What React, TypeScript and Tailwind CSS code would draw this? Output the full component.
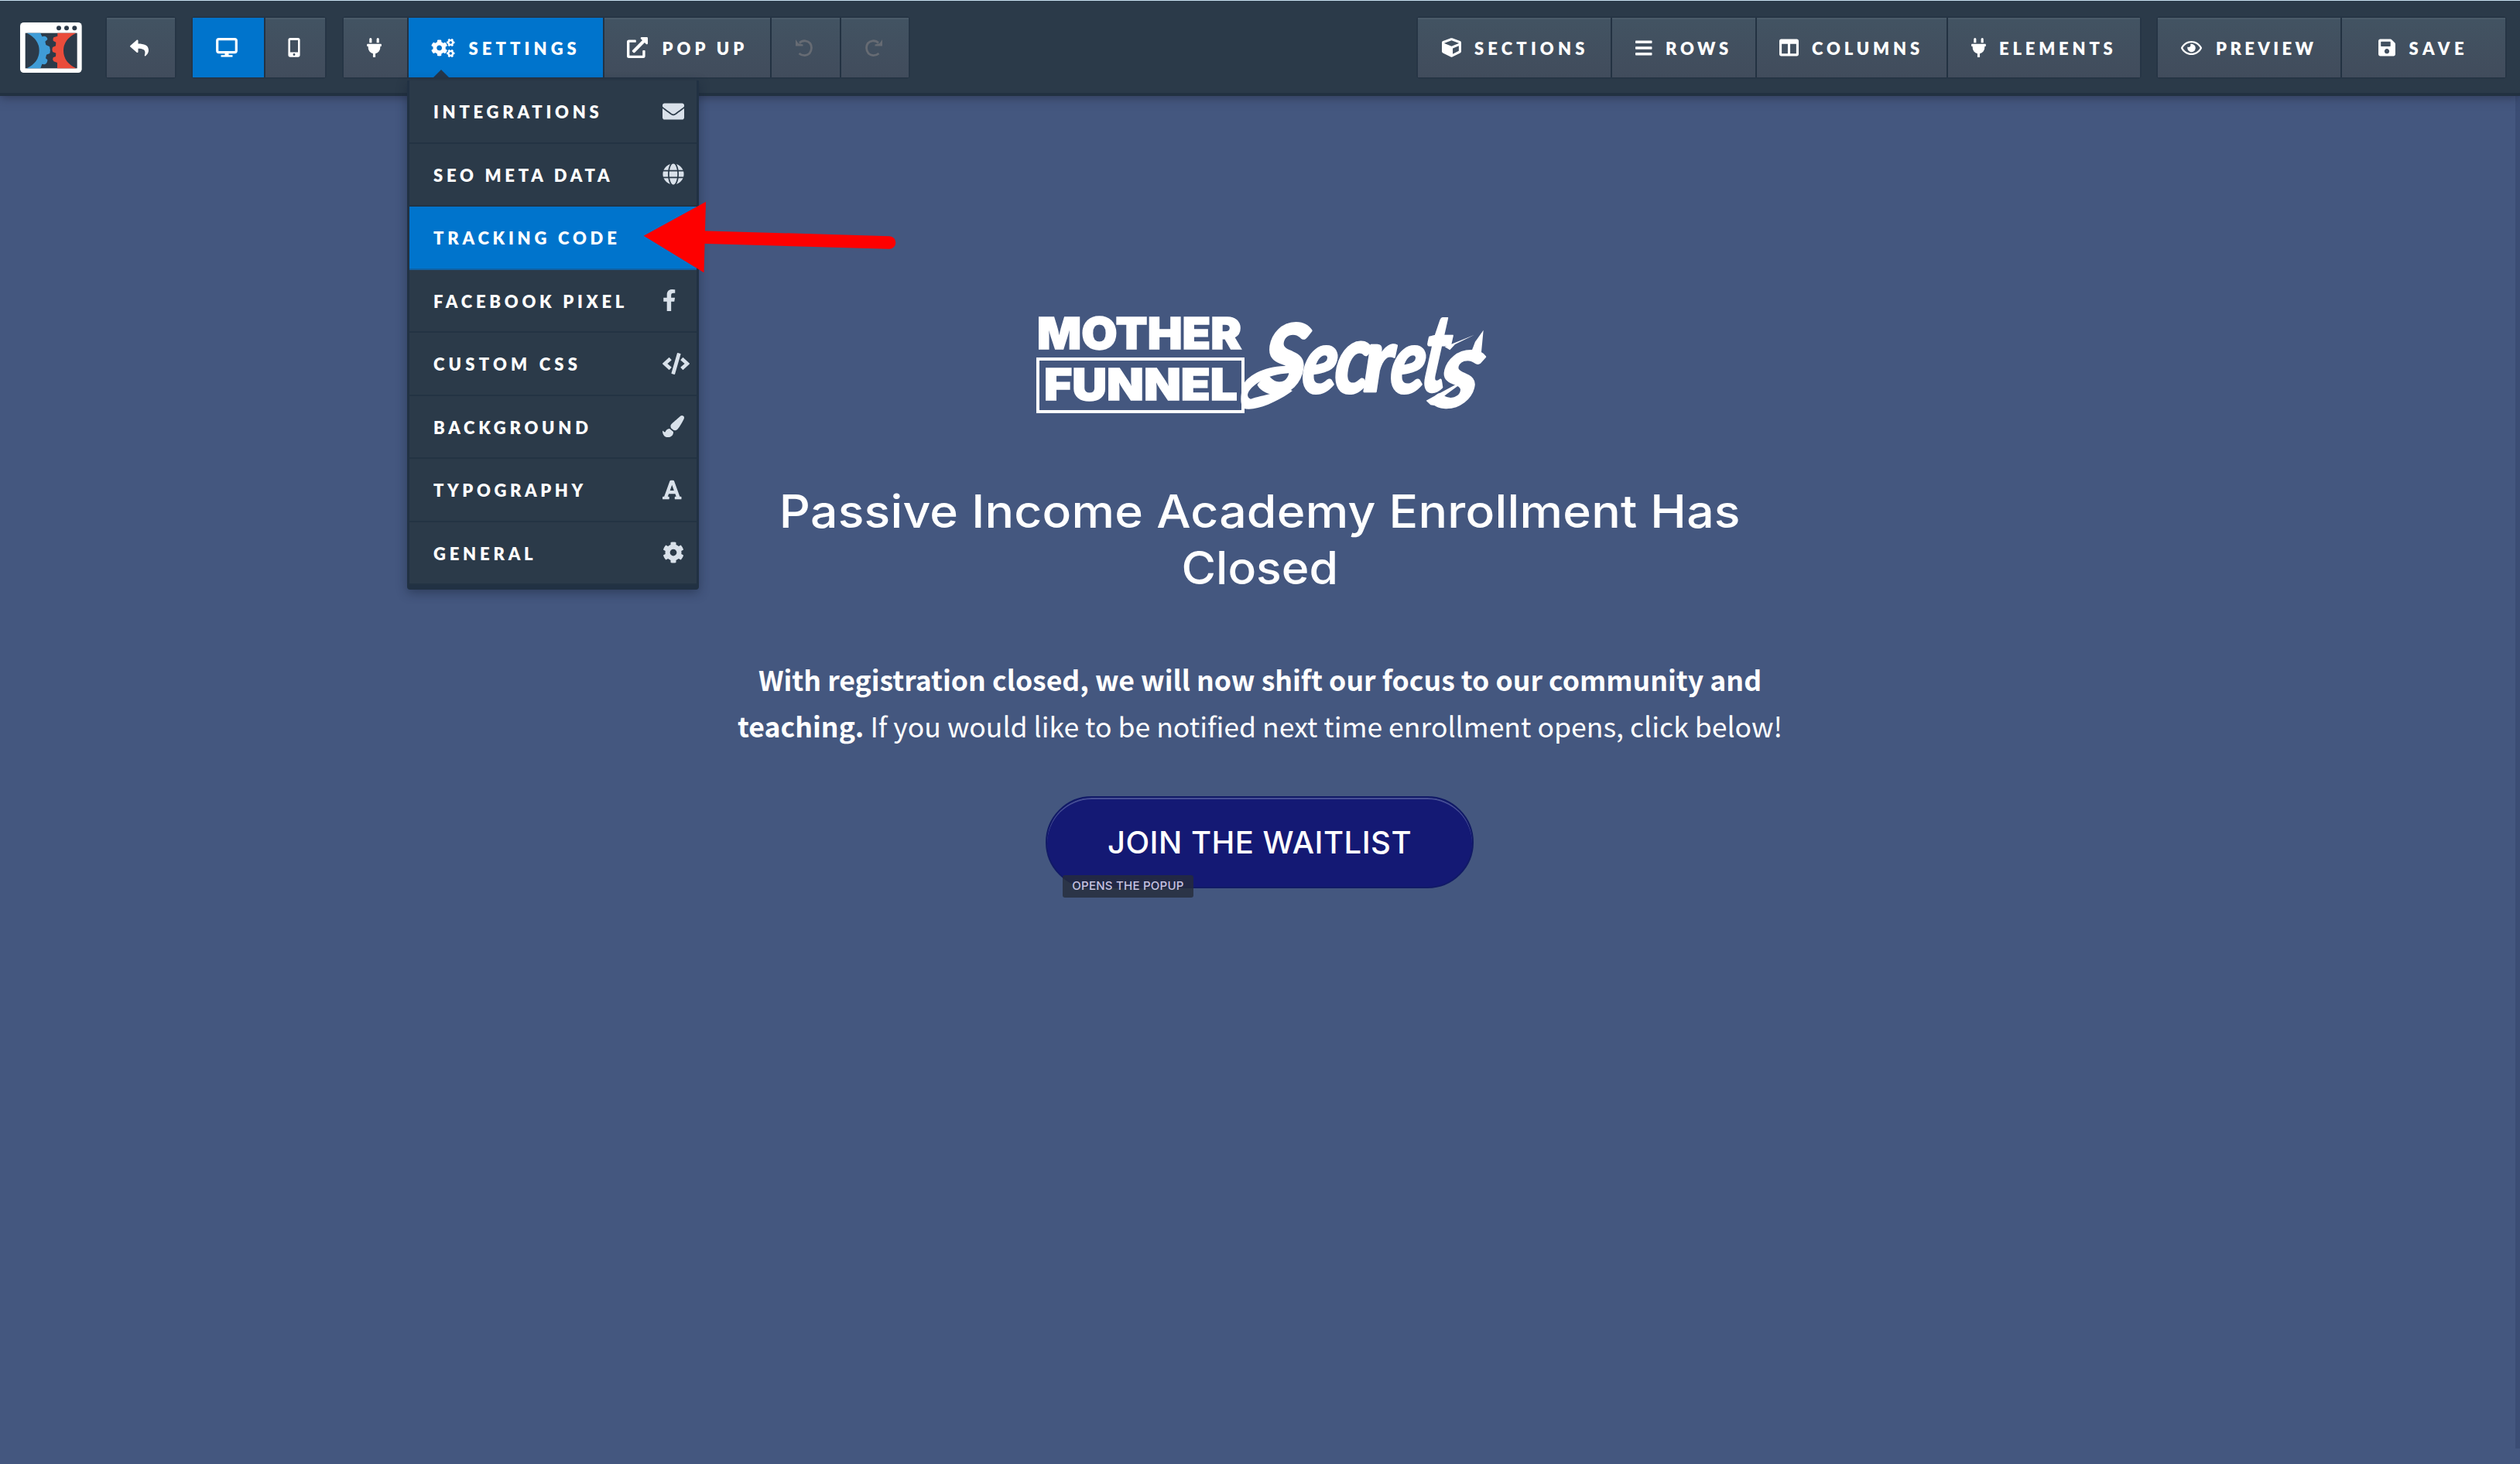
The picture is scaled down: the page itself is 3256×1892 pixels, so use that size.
import type { ReactNode } from "react";
import {
  FaCode, FaCog, FaCogs, FaColumns, FaCube, FaEnvelope, FaExternalLinkAlt, FaFacebookF,
  FaFont, FaGlobe, FaPaintBrush, FaPlug, FaRegEye, FaReply, FaSave,
} from "react-icons/fa";

function Logo() {
  return (
    <svg viewBox="0 0 300 240" className="ml-5 h-20 w-[100px] shrink-0" aria-hidden="true">
      <rect x="18" y="27" width="239" height="195" rx="14" fill="#fff" />
      <rect x="38" y="68" width="201" height="137" fill="#2c3a49" />
      <path d="M44 68H97L103 82L112 80Q124 82 124 93L115 101L118 114L132 121Q137 135 133 147L120 152L117 166L124 172Q125 186 112 190L103 188L97 205H44Q92 182 92 136Q92 92 44 68Z" fill="#3f9cd7" />
      <path d="M235 68H163V80L148 85Q143 92 146 98L157 104L156 118L144 123Q140 132 144 141L157 146L156 159L146 163Q142 170 148 178L162 183V205H235Q186 182 186 136Q186 92 235 68Z" fill="#ea4c3b" />
      <circle cx="168" cy="49" r="9" fill="#2c3a49" />
      <circle cx="198" cy="49" r="9" fill="#2c3a49" />
      <circle cx="229" cy="49" r="9" fill="#2c3a49" />
    </svg>
  );
}

function DesktopIcon() {
  return (
    <svg viewBox="0 0 28 25" className="h-[25px] w-7" fill="none" stroke="#fff" aria-hidden="true">
      <rect x="1.7" y="1.6" width="24.6" height="17" rx="2" strokeWidth="3.2" />
      <path d="M14 19V23" strokeWidth="5" />
      <path d="M6.5 23.4H21.5" strokeWidth="2.4" />
    </svg>
  );
}

function MobileIcon() {
  return (
    <svg viewBox="0 0 16 25" className="h-[25px] w-4" aria-hidden="true">
      <path fillRule="evenodd" fill="#fff" d="M3 0H13Q15.6 0 15.6 2.6V22Q15.6 24.8 13 24.8H3Q.4 24.8 .4 22V2.6Q.4 0 3 0ZM3 3V18.6H13V3ZM8 20A1.4 1.4 0 1 0 8 22.9A1.4 1.4 0 1 0 8 20Z" />
    </svg>
  );
}

function TurnIcon({ flip }: { flip?: boolean }) {
  return (
    <svg viewBox="0 0 24 24" className={flip ? "h-6 w-6 -scale-x-100" : "h-6 w-6"} fill="none" stroke="#666b73" aria-hidden="true">
      <path d="M6 5.5Q9 2.5 13.5 2.8Q21.5 4 21.5 12Q21 20.5 13 21.6Q8.500 21.800 5.500 19" strokeWidth="2.8" />
      <path d="M1 1L1 9.500H10.500V7.500L4.500 6Z" fill="#666b73" stroke="none" />
    </svg>
  );
}

function RowsIcon() {
  return (
    <svg viewBox="0 0 22 20" className="h-5 w-[22px]" fill="#fff" aria-hidden="true">
      <rect y=".5" width="21.500" height="3.600" rx=".8" />
      <rect y="8.200" width="21.500" height="3.600" rx=".8" />
      <rect y="15.900" width="21.500" height="3.600" rx=".8" />
    </svg>
  );
}

function Group({ className, children }: { className: string; children: ReactNode }) {
  return (
    <div className={`flex h-[77px] shrink-0 gap-[2px] rounded-[3px] bg-[#233242] ring-2 ring-[#263545] ${className}`}>
      {children}
    </div>
  );
}

const idle = "bg-linear-to-b from-[#425362] to-[#414c5c] shadow-[inset_0_2px_0_#4b5b69]";
const active = "bg-[#0074cc]";

function Tool({ className, on, children }: { className: string; on?: boolean; children: ReactNode }) {
  return (
    <button className={`relative flex h-full shrink-0 items-center whitespace-nowrap text-white ${on ? active : idle} ${className}`}>
      {children}
    </button>
  );
}

function Label({ className, children }: { className: string; children: ReactNode }) {
  return <span className={`pt-[3px] font-[Lato,sans-serif] text-[22px] leading-[74px] font-extrabold ${className}`}>{children}</span>;
}

function Item({ label, tracking, icon, on }: { label: string; tracking: string; icon?: ReactNode; on?: boolean }) {
  return (
    <li className={`flex h-[81.5px] items-center border-b-2 pl-[31px] ${on ? "border-[#1161a3] bg-[#0074cc]" : "border-[#233343]"}`}>
      <span className={`w-[296px] pt-[2px] font-[Lato,sans-serif] text-[22px] font-extrabold whitespace-nowrap text-white ${tracking}`}>{label}</span>
      <span className="text-[28px] text-[#d9e1ea]">{icon}</span>
    </li>
  );
}

function SettingsMenu() {
  return (
    <div className="absolute top-[81px] -left-[2px] z-10 w-[377px] rounded-b-[4px] border-x-3 border-b-6 border-[#213143] bg-[#2b3a49] shadow-[0_4px_14px_rgba(20,30,50,0.45)]">
      <ul>
        <Item label="INTEGRATIONS" tracking="tracking-[4.75px]" icon={<FaEnvelope />} />
        <Item label="SEO META DATA" tracking="tracking-[4.75px]" icon={<FaGlobe />} />
        <Item label="TRACKING CODE" tracking="tracking-[4.8px]" on />
        <Item label="FACEBOOK PIXEL" tracking="tracking-[4.75px]" icon={<FaFacebookF className="w-[17.5px]" />} />
        <Item label="CUSTOM CSS" tracking="tracking-[5.2px]" icon={<FaCode className="w-[35px]" />} />
        <Item label="BACKGROUND" tracking="tracking-[4.75px]" icon={<FaPaintBrush />} />
        <Item label="TYPOGRAPHY" tracking="tracking-[4.6px]" icon={<FaFont className="w-[24.5px]" />} />
        <Item label="GENERAL" tracking="tracking-[4.8px]" icon={<FaCog />} />
      </ul>
    </div>
  );
}

function Header() {
  return (
    <header className="relative z-10 flex h-[124px] w-full items-start border-t border-b-4 border-t-[#c9e2f2] border-b-[#223141] bg-[#2b3a49] shadow-[0_2px_12px_rgba(35,40,60,0.6)]">
      <div className="mt-[19px] w-[138px]"><Logo /></div>
      <Group className="mt-[22px] w-[88px]">
        <Tool className="w-full pl-[30px]"><FaReply className="h-6 w-6" /></Tool>
      </Group>
      <Group className="mt-[22px] ml-[23px] w-[171px]">
        <Tool on className="w-[91.5px] pl-[30px]"><DesktopIcon /></Tool>
        <Tool className="grow pl-[29px]"><MobileIcon /></Tool>
      </Group>
      <Group className="mt-[22px] ml-[24px] w-[730px]">
        <Tool className="w-[82px] pl-[30px]"><FaPlug className="h-[25px] w-[19px]" /></Tool>
        <div className="relative">
          <Tool on className="w-[251px] pl-[29px]">
            <FaCogs className="h-6 w-[31px]" />
            <Label className="ml-[17.5px] tracking-[5.1px]">SETTINGS</Label>
            <span className="absolute bottom-0 left-[32px] border-x-10 border-b-10 border-x-transparent border-b-[#25364a]" />
          </Tool>
          <SettingsMenu />
        </div>
        <Tool className="w-[214px] pl-[29px]">
          <FaExternalLinkAlt className="h-[27px] w-[27px]" />
          <Label className="ml-[18.5px] tracking-[5px]">POP UP</Label>
        </Tool>
        <Tool className="w-[88px] pl-[30px]"><TurnIcon /></Tool>
        <Tool className="grow pl-[30px]"><TurnIcon flip /></Tool>
      </Group>
      <Group className="mt-[22px] ml-[658px] w-[933px]">
        <Tool className="w-[249px] pl-[31px]"><FaCube className="h-[25px] w-[25px]" /><Label className="ml-[17px] tracking-[5.15px]">SECTIONS</Label></Tool>
        <Tool className="w-[185px] pl-[30px]"><RowsIcon /><Label className="ml-[17px] tracking-[4.7px]">ROWS</Label></Tool>
        <Tool className="w-[245px] pl-[29px]"><FaColumns className="h-[25px] w-[25px]" /><Label className="ml-[17px] tracking-[4.85px]">COLUMNS</Label></Tool>
        <Tool className="grow pl-[30px]"><FaPlug className="h-[25px] w-[19px]" /><Label className="ml-[17px] tracking-[4.8px]">ELEMENTS</Label></Tool>
      </Group>
      <Group className="mt-[22px] ml-[23px] w-[449px]">
        <Tool className="w-[236px] pl-[30px]"><FaRegEye className="h-6 w-[27px]" /><Label className="ml-[18px] tracking-[4.4px]">PREVIEW</Label></Tool>
        <Tool className="grow pl-[46.5px]"><FaSave className="h-[25px] w-[22px]" /><Label className="ml-[18px] tracking-[5.6px]">SAVE</Label></Tool>
      </Group>
    </header>
  );
}

const script = [
  { ch: "S", at: "translate(104 338) skewX(-8)", size: 372, width: 176, weight: 900 },
  { ch: "e", at: "translate(270 338) skewX(-6)", size: 350, width: 136, weight: 900 },
  { ch: "c", at: "translate(396 338) skewX(-6)", size: 380, width: 136, weight: 900 },
  { ch: "r", at: "translate(512 333) skewX(-2)", size: 350, width: 120, weight: 900 },
  { ch: "e", at: "translate(612 338) skewX(-6)", size: 350, width: 136, weight: 900 },
  { ch: "t", at: "translate(730 332) skewX(-8)", size: 425, width: 104, weight: 700 },
  { ch: "s", at: "translate(778 394) skewX(-14)", size: 420, width: 166, weight: 700 },
];

function Wordmark() {
  return (
    <div className="relative mt-[286px] h-[124px] w-[579px] font-[Inter,sans-serif] font-black text-white">
      <div className="ml-px h-[42px] w-[262px] origin-left scale-x-[1.05] text-[57px] leading-[42px] [-webkit-text-stroke:1.5px_white]">MOTHER</div>
      <div className="mt-[10px] h-[72px] w-[269px] border-4 border-white">
        <div className="mt-[10px] ml-[6px] origin-left scale-x-[1.09] text-[57px] leading-[42px] [-webkit-text-stroke:1.5px_white]">FUNNEL</div>
      </div>
      <svg viewBox="0 0 1020 450" className="absolute -top-[15px] left-[251px] h-[150px] w-[340px] overflow-visible" fill="#fff" stroke="#fff" aria-label="Secrets">
        <g fontFamily="Lato, sans-serif" fontStyle="italic" strokeWidth="7" strokeLinejoin="round">
          {script.map((g, i) => (
            <text key={i} transform={g.at} fontSize={g.size} fontWeight={g.weight} textLength={g.width} lengthAdjust="spacingAndGlyphs">{g.ch}</text>
          ))}
        </g>
        <path d="M262 240C160 215 60 270 48 310C38 345 36 385 50 398C90 412 180 375 240 330L215 320C160 345 110 350 78 362C50 350 75 315 120 290C160 268 200 262 240 262Z" stroke="none" />
        <path d="M925 200L948 140L980 95L972 180L955 200Z" stroke="none" />
        <path d="M830 160L945 113L870 150L850 172Z" stroke="none" />
        <path d="M758 368L800 345L930 275L812 362L820 392L775 385Z" stroke="none" />
      </svg>
    </div>
  );
}

function CalloutArrow() {
  return (
    <svg viewBox="0 0 340 100" className="absolute top-[256px] left-[828px] z-20 h-[100px] w-[340px]" aria-hidden="true">
      <path d="M3.700 48.700L84 4.700L81.500 96.300Z" fill="#fe0000" />
      <path d="M78 50.500L321 57.500" stroke="#fe0000" strokeWidth="16.600" strokeLinecap="round" />
    </svg>
  );
}

export default function App() {
  return (
    <div className="relative flex h-[1892px] w-[3256px] flex-col overflow-hidden bg-[#44577f]">
      <Header />
      <CalloutArrow />
      <div className="absolute top-[124px] right-0 h-[1748px] w-[6px] bg-[#3b4d74]" />
      <main className="flex flex-col items-center">
        <Wordmark />
        <h1 className="mt-[90px] text-center font-[Inter,sans-serif] text-[59px] leading-[73px] font-medium text-white">
          <span className="block scale-x-[1.06] tracking-[0.2px]">Passive Income Academy Enrollment Has</span>
          <span className="block scale-x-[1.03] tracking-normal">Closed</span>
        </h1>
        <p className="mt-[78px] text-center font-['Noto_Sans_CJK_SC',sans-serif] text-[35.6px] leading-[60px] whitespace-nowrap text-white">
          <b>With registration closed, we will now shift our focus to our community and<br />teaching.</b> If you would like to be notified next time enrollment opens, click below!
        </p>
        <div className="relative mt-[61px] -ml-px">
          <button className="block h-[119px] w-[553px] rounded-full border-2 border-[#111a66] bg-[#141974] font-[Inter,sans-serif] text-[40px] leading-[115px] font-medium tracking-[0.5px] text-white shadow-[inset_0_2px_0_#474f95]">JOIN THE WAITLIST</button>
          <span className="absolute top-[102px] left-[22px] flex h-[29px] w-[169px] items-center justify-center rounded-[3px] bg-[#262c3a]/80 font-[Inter,sans-serif] text-[15px] font-medium tracking-[0.25px] whitespace-nowrap text-[#c6c2e0]">OPENS THE POPUP</span>
        </div>
      </main>
    </div>
  );
}
